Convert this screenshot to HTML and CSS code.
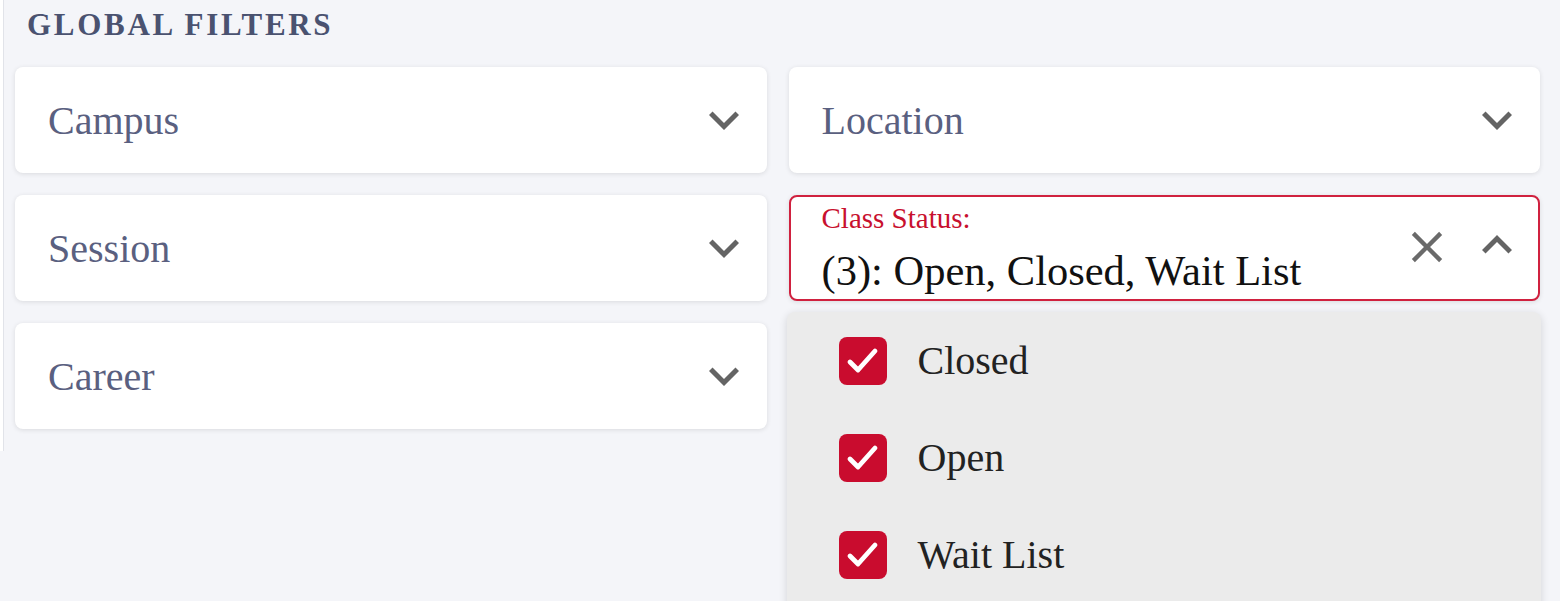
FILE: index.html
```html
<!DOCTYPE html>
<html lang="en">
<head>
    <meta charset="UTF-8">
    <meta name="viewport" content="width=device-width, initial-scale=1.0">
    <title>Global Filters</title>
    <link rel="stylesheet" href="styles.css">
</head>
<body>
    <div class="panel">
        <h2 class="panel-title">Global Filters</h2>
        <div class="filter-grid">
            <div class="select">
                <span class="select-text">Campus</span>
                <svg class="chevron" viewBox="0 0 24 24"><path d="M16.59 8.59 12 13.17 7.41 8.59 6 10l6 6 6-6z"/></svg>
            </div>
            <div class="select">
                <span class="select-text">Location</span>
                <svg class="chevron" viewBox="0 0 24 24"><path d="M16.59 8.59 12 13.17 7.41 8.59 6 10l6 6 6-6z"/></svg>
            </div>
            <div class="select">
                <span class="select-text">Session</span>
                <svg class="chevron" viewBox="0 0 24 24"><path d="M16.59 8.59 12 13.17 7.41 8.59 6 10l6 6 6-6z"/></svg>
            </div>
            <div class="select-wrap">
                <div class="select select-open">
                    <div class="select-value">
                        <span class="select-label">Class Status:</span>
                        <span class="select-current">(3): Open, Closed, Wait List</span>
                    </div>
                    <svg class="clear" viewBox="0 0 24 24"><path d="M19 6.41 17.59 5 12 10.59 6.41 5 5 6.41 10.59 12 5 17.59 6.41 19 12 13.41 17.59 19 19 17.59 13.41 12z"/></svg>
                    <svg class="chevron" viewBox="0 0 24 24"><path d="M12 8l-6 6 1.41 1.41L12 10.83l4.59 4.58L18 14z"/></svg>
                </div>
                <ul class="menu">
                    <li class="menu-item">
                        <svg class="check" viewBox="0 0 24 24"><rect x="0" y="0" width="24" height="24" rx="4"/><path d="M5.5 12.5l4 4 8.5-9.5"/></svg>
                        Closed
                    </li>
                    <li class="menu-item">
                        <svg class="check" viewBox="0 0 24 24"><rect x="0" y="0" width="24" height="24" rx="4"/><path d="M5.5 12.5l4 4 8.5-9.5"/></svg>
                        Open
                    </li>
                    <li class="menu-item">
                        <svg class="check" viewBox="0 0 24 24"><rect x="0" y="0" width="24" height="24" rx="4"/><path d="M5.5 12.5l4 4 8.5-9.5"/></svg>
                        Wait List
                    </li>
                </ul>
            </div>
            <div class="select">
                <span class="select-text">Career</span>
                <svg class="chevron" viewBox="0 0 24 24"><path d="M16.59 8.59 12 13.17 7.41 8.59 6 10l6 6 6-6z"/></svg>
            </div>
        </div>
    </div>
</body>
</html>
```

FILE: styles.css
```css
html, body {
    height: 100%;
}
body {
    margin: 0;
    background-color: #f4f5f9;
    font-family: 'Liberation Serif', 'Times New Roman', serif;
    overflow: hidden;
}
.panel {
    margin-left: 3px;
    border-left: 1px solid #e1e3e9;
    box-shadow: -3px 0 0 #ffffff;
    padding: 6px 20px 22px 11px;
}
.panel-title {
    margin: 0 0 23px 12px;
    font-size: 31px;
    line-height: 38px;
    letter-spacing: 2.7px;
    text-transform: uppercase;
    font-weight: bold;
    color: #4a5270;
}
.filter-grid {
    display: grid;
    grid-template-columns: 1fr 1fr;
    gap: 22px;
}
.select {
    box-sizing: border-box;
    height: 106px;
    background-color: #ffffff;
    border-radius: 8px;
    box-shadow: 0 1px 5px rgba(0, 0, 0, 0.11);
    display: flex;
    align-items: center;
    padding: 0 13px 0 33px;
}
.select-text {
    flex: 1;
    font-size: 40px;
    color: #5a6080;
}
.chevron {
    width: 60px;
    height: 60px;
    fill: #646464;
}
.select-wrap {
    position: relative;
}
.select-open {
    border: 2px solid #d0213f;
    padding-left: 31px;
    padding-right: 11px;
    align-items: flex-start;
}
.select-value {
    flex: 1;
    display: flex;
    flex-direction: column;
    padding-top: 4px;
}
.select-label {
    font-size: 29px;
    line-height: 35px;
    color: #c8102e;
}
.select-current {
    margin-top: 10px;
    font-size: 42.5px;
    line-height: 50px;
    color: #111111;
}
.select-open .clear {
    width: 52px;
    height: 52px;
    fill: #6a6a6a;
    margin-top: 24px;
    margin-right: 14px;
}
.select-open .chevron {
    margin-top: 18px;
}
.menu {
    position: absolute;
    top: calc(100% + 11px);
    left: -2px;
    right: -1px;
    margin: 0;
    padding: 0 0 20px 0;
    list-style: none;
    background-color: #ebebeb;
    border-radius: 8px;
    box-shadow: 0 2px 8px rgba(0, 0, 0, 0.14);
}
.menu-item {
    height: 97px;
    display: flex;
    align-items: center;
    padding-left: 52px;
    font-size: 40px;
    color: #222222;
}
.check {
    width: 48px;
    height: 48px;
    margin-right: 31px;
}
.check rect {
    fill: #c90c2e;
}
.check path {
    fill: none;
    stroke: #ffffff;
    stroke-width: 2.4;
    stroke-linecap: round;
    stroke-linejoin: round;
}
```
